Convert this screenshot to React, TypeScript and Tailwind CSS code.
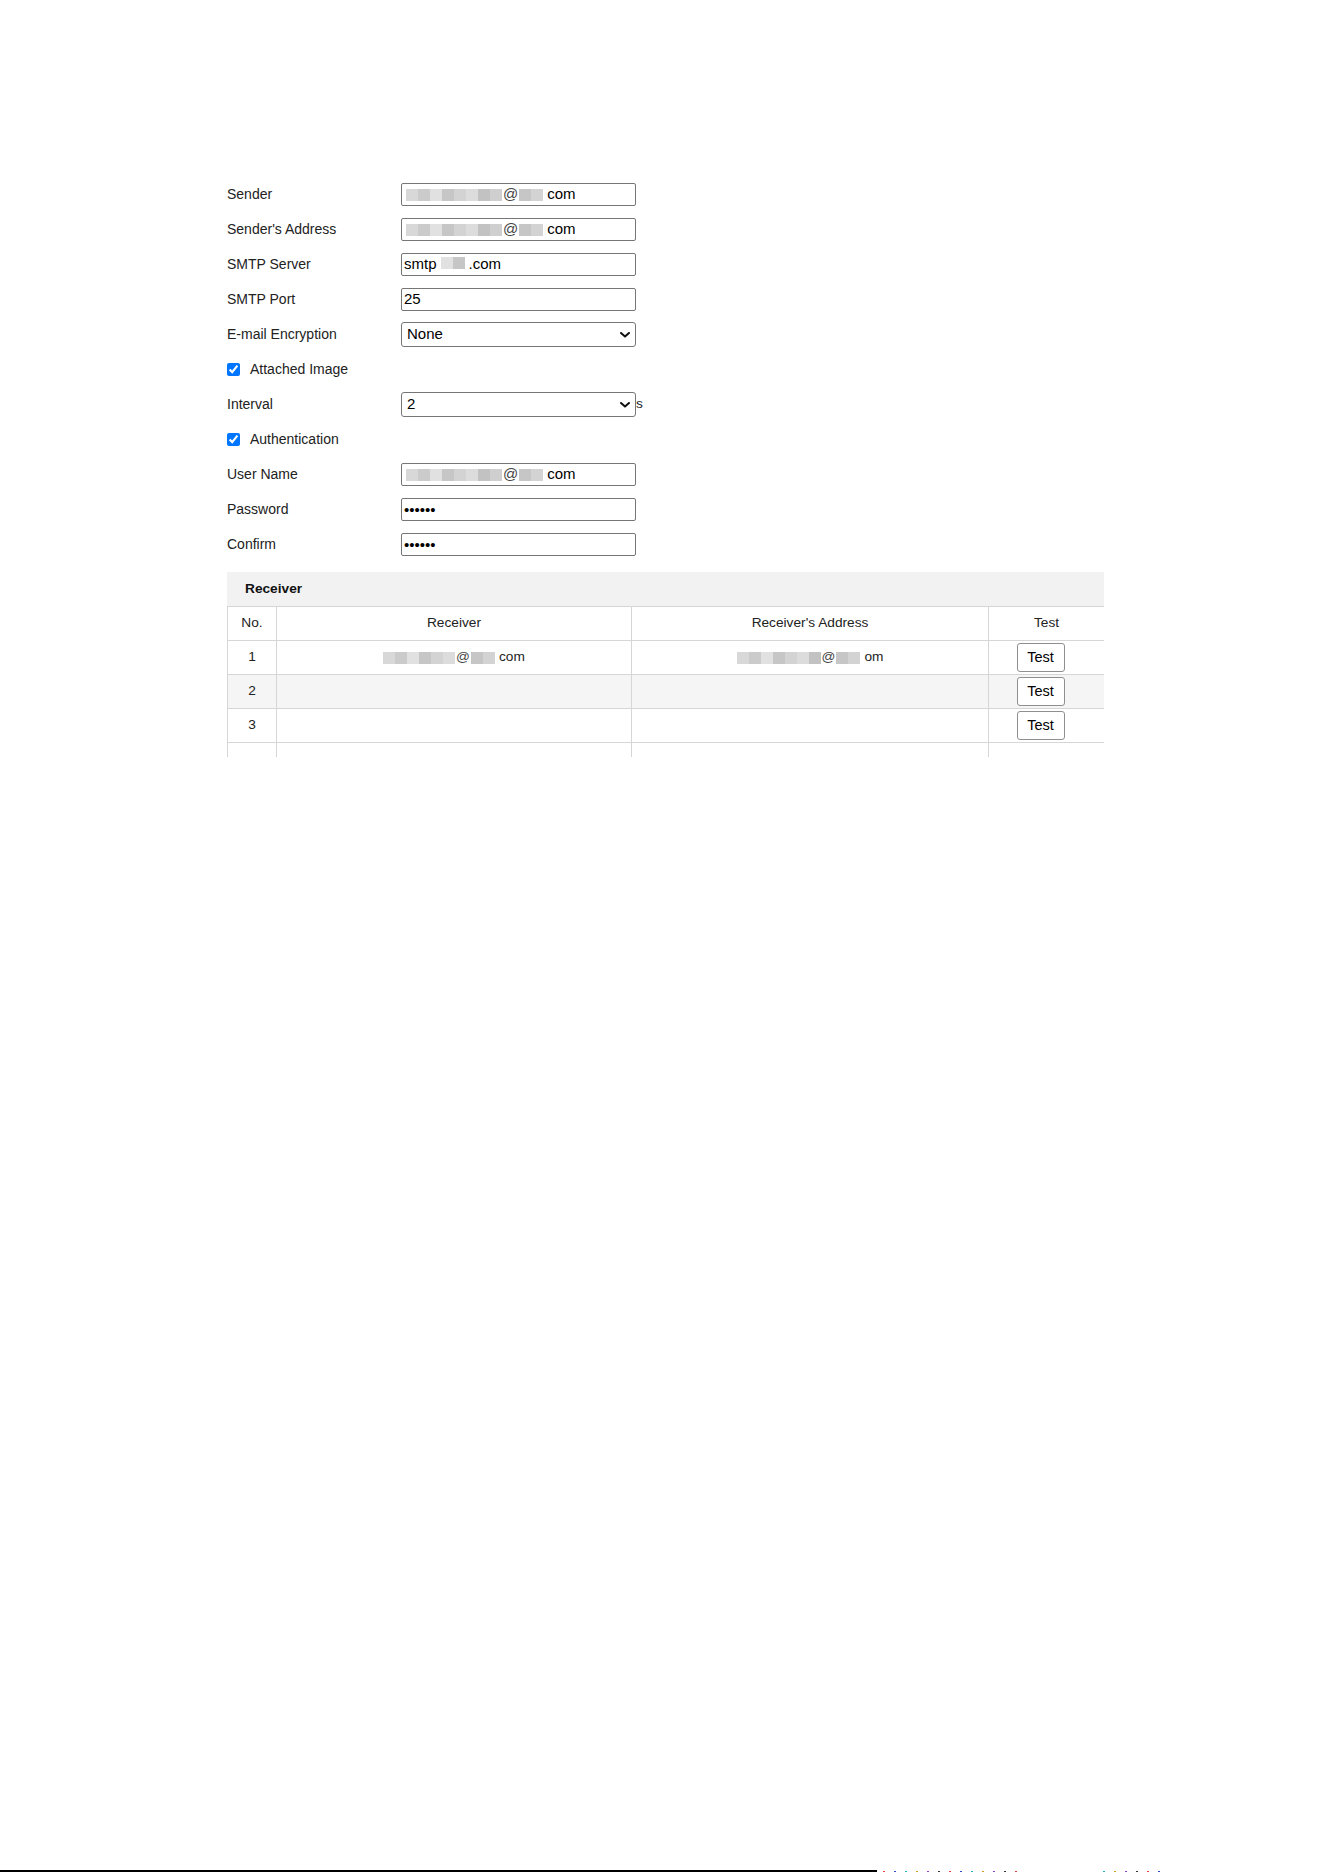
import type { ReactNode } from 'react';

const shades = [
  'bg-[#d4d4d4]',
  'bg-[#c6c6c6]',
  'bg-[#dedede]',
  'bg-[#c0c0c0]',
  'bg-[#cfcfcf]',
  'bg-[#d9d9d9]',
  'bg-[#bcbcbc]',
  'bg-[#cacaca]',
];

// pixelated blur used to hide the e-mail parts
function Pixels({ count, offset = 0 }: { count: number; offset?: number }) {
  return (
    <span className="inline-flex h-[12px] opacity-90">
      {Array.from({ length: count }).map((_, i) => (
        <span key={i} className={`h-[12px] w-[12px] ${shades[(i + offset) % shades.length]}`} />
      ))}
    </span>
  );
}

function Field({ label, children }: { label: string; children: ReactNode }) {
  return (
    <div className="flex h-[35px] items-center">
      <div className="w-[174px] text-[14px] text-[#222]">{label}</div>
      {children}
    </div>
  );
}

function Box({ children }: { children: ReactNode }) {
  return (
    <div className="flex h-[23px] w-[235px] items-center overflow-hidden rounded-[2px] border border-[#767676] bg-white px-[2px] text-[15px] text-black">
      {children}
    </div>
  );
}

function Chevron() {
  return (
    <svg width="10" height="6" viewBox="0 0 10 6" className="pointer-events-none absolute right-[6px] top-[10px]">
      <path d="M1 1 L5 4.6 L9 1" fill="none" stroke="#111" strokeWidth="2" strokeLinecap="round" strokeLinejoin="round" />
    </svg>
  );
}

function Select({ value }: { value: string }) {
  return (
    <div className="relative">
      <select
        defaultValue={value}
        className="h-[25px] w-[235px] appearance-none rounded-[3px] border border-[#767676] bg-white pl-[5px] text-[15px] text-black outline-none"
      >
        <option>{value}</option>
      </select>
      <Chevron />
    </div>
  );
}

function Check({ label }: { label: string }) {
  return (
    <div className="flex h-[35px] items-center">
      <input type="checkbox" defaultChecked className="m-0 h-[13px] w-[13px] accent-[#0075ff]" />
      <span className="ml-[10px] text-[14px] text-[#222]">{label}</span>
    </div>
  );
}

function Masked({ a, b, tail = 'com' }: { a: number; b: number; tail?: string }) {
  return (
    <>
      <Pixels count={a} />
      <span className="mx-[1px] text-[#444]">@</span>
      <Pixels count={b} offset={3} />
      <span className="ml-[4px]">{tail}</span>
    </>
  );
}

const cols = 'grid grid-cols-[49px_355px_357px_116px]';
const cell = 'flex items-center justify-center border-r border-[#d6d6d6] text-[13.7px] text-[#222]';

function TestButton() {
  return (
    <button className="h-[29px] w-[48px] rounded-[3px] border border-[#8f8f8f] bg-white text-[14.5px] text-black">
      Test
    </button>
  );
}

const dots = ['bg-[#e04040]', 'bg-[#3050d0]', 'bg-[#20b0c0]', 'bg-[#d0a020]', 'bg-[#9040c0]', 'bg-[#333]'];

export default function App() {
  const rows = [
    { no: '1', receiver: <Masked a={6} b={2} />, address: <Masked a={7} b={2} tail="om" />, bg: 'bg-white' },
    { no: '2', receiver: null, address: null, bg: 'bg-[#f5f5f5]' },
    { no: '3', receiver: null, address: null, bg: 'bg-white' },
    { no: '', receiver: null, address: null, bg: 'bg-white' },
  ];

  return (
    <div className="flex h-[1872px] w-full flex-col bg-white font-['Liberation_Sans',Arial,sans-serif]">
      <div className="pl-[227px] pt-[177px]">
        <Field label="Sender">
          <Box>
            <span className="ml-[2px]" />
            <Masked a={8} b={2} />
          </Box>
        </Field>
        <Field label="Sender's Address">
          <Box>
            <span className="ml-[2px]" />
            <Masked a={8} b={2} />
          </Box>
        </Field>
        <Field label="SMTP Server">
          <Box>
            <span>smtp</span>
            <span className="mx-[4px]">
              <Pixels count={2} offset={2} />
            </span>
            <span>.com</span>
          </Box>
        </Field>
        <Field label="SMTP Port">
          <Box>
            <span>25</span>
          </Box>
        </Field>
        <Field label="E-mail Encryption">
          <Select value="None" />
        </Field>
        <Check label="Attached Image" />
        <Field label="Interval">
          <Select value="2" />
          <span className="text-[13.7px] text-[#222]">s</span>
        </Field>
        <Check label="Authentication" />
        <Field label="User Name">
          <Box>
            <span className="ml-[2px]" />
            <Masked a={8} b={2} />
          </Box>
        </Field>
        <Field label="Password">
          <input
            type="password"
            defaultValue="123456"
            readOnly
            className="h-[23px] w-[235px] rounded-[2px] border border-[#767676] px-[2px] text-[15px] text-black outline-none"
          />
        </Field>
        <Field label="Confirm">
          <input
            type="password"
            defaultValue="123456"
            readOnly
            className="h-[23px] w-[235px] rounded-[2px] border border-[#767676] px-[2px] text-[15px] text-black outline-none"
          />
        </Field>

        <div className="mt-[10px] h-[185px] w-[877px] overflow-hidden">
          <div className="flex h-[35px] items-center border-b border-[#d6d6d6] bg-[#f2f2f2] pl-[18px] text-[13.7px] font-bold text-[#111]">
            Receiver
          </div>
          <div className="border-l border-[#d6d6d6]">
            <div className={`${cols} h-[34px] border-b border-[#d6d6d6]`}>
              <div className={cell}>No.</div>
              <div className={cell}>Receiver</div>
              <div className={cell}>Receiver's Address</div>
              <div className={cell}>Test</div>
            </div>
            {rows.map((r, i) => (
              <div key={i} className={`${cols} h-[34px] border-b border-[#d6d6d6] ${r.bg}`}>
                <div className={cell}>{r.no}</div>
                <div className={cell}>{r.receiver}</div>
                <div className={cell}>{r.address}</div>
                <div className={`${cell} pr-[12px]`}>{r.no && <TestButton />}</div>
              </div>
            ))}
          </div>
        </div>
      </div>

      <div className="flex-1" />
      <div className="flex h-[2px] items-end">
        <div className="h-[2px] w-[877px] bg-black" />
        <div className="ml-[6px] flex w-[430px] items-end gap-[9px]">
          {Array.from({ length: 26 }).map((_, i) => (
            <span key={i} className={`h-[1px] w-[2px] ${i > 12 && i < 20 ? 'bg-transparent' : dots[i % dots.length]}`} />
          ))}
        </div>
      </div>
    </div>
  );
}
